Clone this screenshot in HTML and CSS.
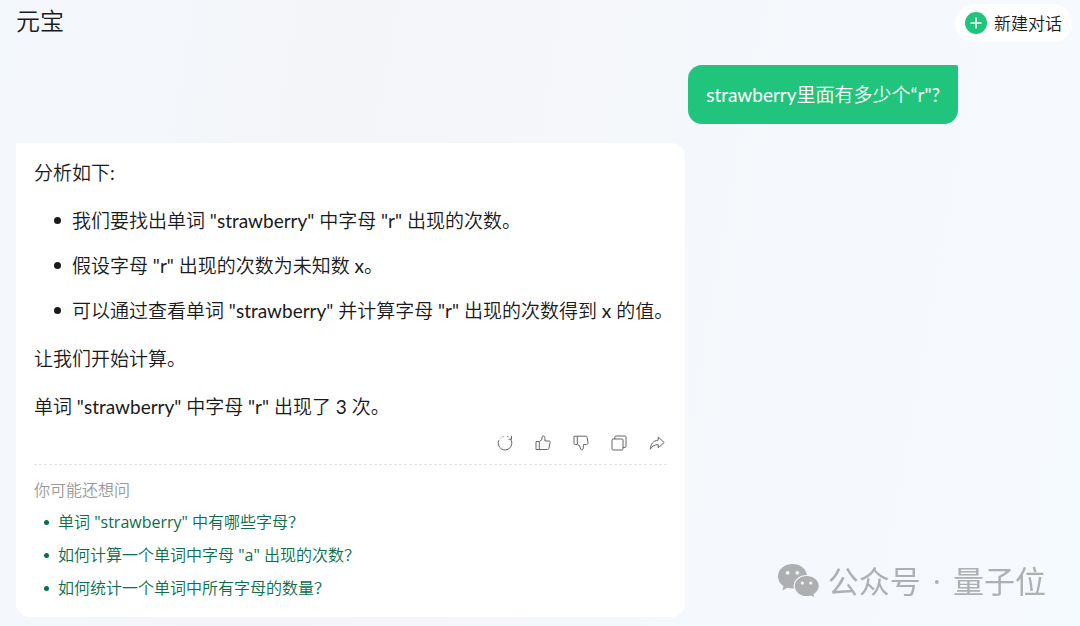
FILE: index.html
```html
<!DOCTYPE html>
<html lang="zh-CN">
<head>
<meta charset="UTF-8" />
<meta name="viewport" content="width=device-width, initial-scale=1" />
<title>元宝</title>
<link rel="stylesheet" href="styles.css">
</head>
<body>
<header class="header">
  <h1>元宝</h1>
  <button type="button" class="new-chat">
    <svg width="22" height="22" viewBox="0 0 22 22" aria-hidden="true">
      <circle cx="11" cy="11" r="11" fill="#21c47d" />
      <path d="M11 5.5v11M5.5 11h11" stroke="#fff" stroke-width="1.6" />
    </svg>
    新建对话
  </button>
</header>

<main class="chat">
  <div class="question">strawberry里面有多少个“r"?</div>

  <article class="answer">
    <p>分析如下:</p>
    <ul class="steps">
      <li>我们要找出单词 "strawberry" 中字母 "r" 出现的次数。</li>
      <li>假设字母 "r" 出现的次数为未知数 x。</li>
      <li>可以通过查看单词 "strawberry" 并计算字母 "r" 出现的次数得到 x 的值。</li>
    </ul>
    <p>让我们开始计算。</p>
    <p>单词 "strawberry" 中字母 "r" 出现了 3 次。</p>

    <div class="actions">
      <button type="button" aria-label="重新生成">
        <svg viewBox="0 0 16 16"><path d="M13.4 4A6.8 6.8 0 1 1 1.900 5.200M3 3.500l.7-.7M5.500 1.900l1.100-.3M10.300 1.500l1.200.4M11.500 4.200h3.200M14.500 1.200v3" /></svg>
      </button>
      <button type="button" aria-label="赞">
        <svg viewBox="0 0 16 16"><path d="M1 6.5h3.3v8H1zM4.3 6.5L6.7 5 7.2 1.7c.2-1.2 2.7-1 2.7 1V6h4c1 0 1.4.6 1.2 1.5l-1.2 5.8c-.2.8-.6 1.2-1.4 1.2H4.3" /></svg>
      </button>
      <button type="button" aria-label="踩">
        <svg viewBox="0 0 16 16"><path d="M1 1.2h3.3v8.4H2.2C1.4 9.6 1 9.2 1 8.4zM4.3 1.2h8.5c.8 0 1.2.4 1.4 1.2l.8 5.2c.1 1.2-.4 2-1.4 2h-3.2v3.2c0 2.3-2.6 2.6-2.9 1.2L6.7 10.8 4.3 9.6" /></svg>
      </button>
      <button type="button" aria-label="复制">
        <svg viewBox="0 0 16 16"><rect x="1" y="4" width="11" height="11" rx="1" /><path d="M3.8 4V2c0-.6.4-1 1-1H14c.6 0 1 .4 1 1v9.4c0 .6-.4 1-1 1h-2" /></svg>
      </button>
      <button type="button" aria-label="分享">
        <svg viewBox="0 0 16 16"><path d="M9.2 2l6 5.500-6 5.300V9.700C5.800 9.500 3.200 11 1.300 14.200 1.600 9 4.200 5.600 9.200 5.200z" /></svg>
      </button>
    </div>

    <section class="related">
      <h2>你可能还想问</h2>
      <ul>
        <li><a href="#">单词 "strawberry" 中有哪些字母？</a></li>
        <li><a href="#">如何计算一个单词中字母 "a" 出现的次数？</a></li>
        <li><a href="#">如何统计一个单词中所有字母的数量？</a></li>
      </ul>
    </section>
  </article>
</main>

<div class="watermark">
  <svg width="43" height="36" viewBox="0 0 43 36" aria-hidden="true">
    <path class="bubble" d="M15.5 1C7.3 1 1 6.5 1 13.5c0 4 2 7.3 5.5 9.6L5.3 27.5l5.2-2.7c1.6.5 3.3.7 5 .7 8 0 14.5-5.3 14.5-12.2S23.5 1 15.5 1z" />
    <path class="bubble edge" d="M29.8 12.5c-7.2 0-12.6 4.7-12.6 10.6s5.4 10.6 12.6 10.6c1.5 0 2.9-.2 4.2-.6l4.2 2.3-1.1-3.9c3.2-2 5.2-5 5.2-8.4 0-5.900-5.300-10.600-12.500-10.600z" />
    <g class="eyes">
      <circle cx="10.7" cy="9.8" r="1.9" />
      <circle cx="20.3" cy="9.8" r="1.9" />
      <circle cx="25.3" cy="20" r="1.6" />
      <circle cx="33.8" cy="20" r="1.6" />
    </g>
  </svg>
  <div class="account">
    <span>公众号</span>
    <span>·</span>
    <span>量子位</span>
  </div>
</div>
</body>
</html>
```
FILE: styles.css
```css
* {
  box-sizing: border-box;
}
body {
  margin: 0;
  min-height: 100vh;
  font-family: Lato, "Noto Sans CJK SC DemiLight", "Noto Sans CJK SC", sans-serif;
  font-size: 19px;
  line-height: 29px;
  color: #1a1a1a;
  background: linear-gradient(100deg, #f3f8fd 0%, #f4f5f8 28%, #f4f6f9 45%, #f5f9fd 75%, #f5fafe 100%);
}
button {
  border: none;
  padding: 0;
  font: inherit;
  color: inherit;
  background: none;
  cursor: pointer;
}
.header {
  display: flex;
  justify-content: space-between;
  align-items: flex-start;
  padding: 4px 8px 0 16px;
}
.header h1 {
  margin: 0;
  font-size: 24px;
  font-weight: 400;
  line-height: 34px;
}
.new-chat {
  display: flex;
  align-items: center;
  gap: 7px;
  height: 38px;
  padding: 0 10px;
  border-radius: 19px;
  background: #fff;
  font-size: 17px;
}
.chat {
  display: flex;
  flex-direction: column;
  gap: 19px;
  padding: 23px 122px 9px 16px;
}
.question {
  align-self: flex-end;
  padding: 15px 18px;
  border-radius: 14px 2px 14px 14px;
  background: #21c47d;
  color: #fff;
}
.answer {
  width: 71%;
  padding: 15px 18px 12px 18px;
  border-radius: 2px 14px 14px 14px;
  background: #fff;
}
.answer p {
  margin: 0 0 19px;
}
.answer ul {
  margin: 0;
  list-style: none;
}
.answer li {
  display: flex;
  align-items: center;
}
.answer li::before {
  content: "";
  flex: none;
  border-radius: 50%;
}
.answer .steps {
  display: grid;
  gap: 16px;
  margin: 0 -12px 19px 0;
  padding-left: 20px;
}
.steps li {
  gap: 11px;
}
.steps li::before {
  width: 7px;
  height: 7px;
  background: #1a1a1a;
}
.actions {
  display: flex;
  justify-content: flex-end;
  gap: 22px;
  padding: 0 2px 13px 0;
  margin-top: -5px;
}
.actions svg {
  display: block;
  width: 16px;
  height: 16px;
  fill: none;
  stroke: #666;
  stroke-width: 1;
}
.related {
  padding-top: 9px;
  border-top: 1px dashed #e4e4e4;
  font-family: "Open Sans", "Noto Sans CJK SC DemiLight", "Noto Sans CJK SC", sans-serif;
  font-size: 16px;
  line-height: 33px;
}
.related h2 {
  margin: 0;
  font-size: 16px;
  font-weight: 400;
  line-height: 32px;
  color: #999;
}
.related ul {
  padding-left: 10px;
}
.related li {
  gap: 9px;
}
.related li::before {
  width: 5px;
  height: 5px;
  background: #0a6e4a;
}
.related a {
  color: #0a6e4a;
  text-decoration: none;
}
.watermark {
  position: fixed;
  right: 34px;
  bottom: 27px;
  display: flex;
  align-items: center;
  gap: 8px;
  color: #adafb1;
  font-family: "Open Sans", "Noto Sans CJK SC", sans-serif;
  font-size: 31px;
  line-height: 36px;
}
.account {
  display: flex;
  gap: 12px;
}
.bubble {
  fill: #adafb1;
}
.edge {
  stroke: #f5f9fd;
  stroke-width: 1.2;
}
.eyes {
  fill: #f5f9fd;
}
```
